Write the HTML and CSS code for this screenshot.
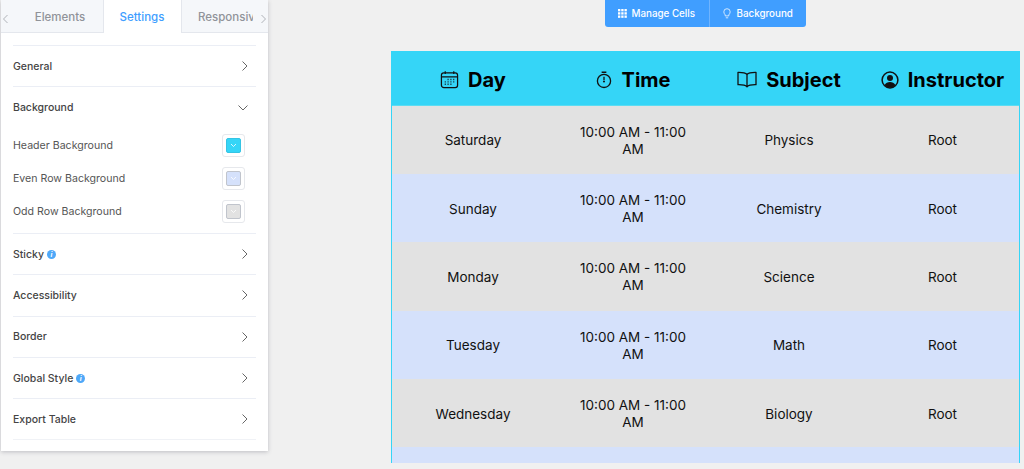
FILE: index.html
```html
<!DOCTYPE html>
<html lang="en">
<head>
<meta charset="utf-8">
<title>Table settings</title>
<link rel="stylesheet" href="styles.css">
</head>
<body>
<div class="page">
  <aside class="panel">
    <div class="tabs">
      <span class="tab-arrow"><svg width="7" height="10" viewBox="0 0 7 10"><path d="M5.5 1 1.500 5l4 4" class="chev"/></svg></span>
      <div class="tab tab-elements">Elements</div>
      <div class="tab tab-active">Settings</div>
      <div class="tab tab-resp"><span class="tab-clip">Responsive</span></div>
      <span class="tab-arrow tab-arrow-r"><svg width="7" height="10" viewBox="0 0 7 10"><path d="M1.500 1l4 4-4 4" class="chev"/></svg></span>
    </div>
    <div class="sections">
      <div class="section"><span class="label">General</span><svg class="arrow" width="8" height="12" viewBox="0 0 8 12"><path d="M1.500 1.500 6 6l-4.500 4.500" class="chev"/></svg></div>
      <div class="section">
        <span class="label">Background</span><svg class="arrow-down" width="12" height="8" viewBox="0 0 12 8"><path d="M1.500 1.500 6 6l4.500-4.500" class="chev"/></svg>
      </div>
      <div class="colors">
        <div class="color-row"><span class="color-label">Header Background</span><span class="swatch"><span class="swatch-fill fill-header"><svg width="7" height="5" viewBox="0 0 7 5"><path d="M1 1l2.500 2.500L6 1" class="swatch-chev"/></svg></span></span></div>
        <div class="color-row"><span class="color-label">Even Row Background</span><span class="swatch"><span class="swatch-fill fill-even"><svg width="7" height="5" viewBox="0 0 7 5"><path d="M1 1l2.500 2.500L6 1" class="swatch-chev"/></svg></span></span></div>
        <div class="color-row"><span class="color-label">Odd Row Background</span><span class="swatch"><span class="swatch-fill fill-odd"><svg width="7" height="5" viewBox="0 0 7 5"><path d="M1 1l2.500 2.500L6 1" class="swatch-chev"/></svg></span></span></div>
      </div>
      <div class="section"><span class="label label-low">Sticky<span class="info">i</span></span><svg class="arrow" width="8" height="12" viewBox="0 0 8 12"><path d="M1.500 1.500 6 6l-4.500 4.500" class="chev"/></svg></div>
      <div class="section"><span class="label">Accessibility</span><svg class="arrow" width="8" height="12" viewBox="0 0 8 12"><path d="M1.500 1.500 6 6l-4.500 4.500" class="chev"/></svg></div>
      <div class="section"><span class="label">Border</span><svg class="arrow" width="8" height="12" viewBox="0 0 8 12"><path d="M1.500 1.500 6 6l-4.500 4.500" class="chev"/></svg></div>
      <div class="section"><span class="label">Global Style<span class="info">i</span></span><svg class="arrow" width="8" height="12" viewBox="0 0 8 12"><path d="M1.500 1.500 6 6l-4.500 4.500" class="chev"/></svg></div>
      <div class="section"><span class="label">Export Table</span><svg class="arrow" width="8" height="12" viewBox="0 0 8 12"><path d="M1.500 1.500 6 6l-4.500 4.500" class="chev"/></svg></div>
    </div>
  </aside>
  <main class="main">
    <div class="toolbar">
      <button class="tool tool-cells">
        <svg width="9" height="9" viewBox="0 0 10 10" fill="#fff"><rect x="0" y="0" width="2.600" height="2.600"/><rect x="3.600" y="0" width="2.600" height="2.600"/><rect x="7.200" y="0" width="2.600" height="2.600"/><rect x="0" y="3.600" width="2.600" height="2.600"/><rect x="3.600" y="3.600" width="2.600" height="2.600"/><rect x="7.200" y="3.600" width="2.600" height="2.600"/><rect x="0" y="7.200" width="2.600" height="2.600"/><rect x="3.600" y="7.200" width="2.600" height="2.600"/><rect x="7.200" y="7.200" width="2.600" height="2.600"/></svg>
        Manage Cells
      </button>
      <button class="tool tool-bg">
        <svg width="8" height="11" viewBox="0 0 8 11" fill="none" stroke="#fff" stroke-opacity=".75" stroke-width="1"><path d="M4 .7a3.200 3.200 0 0 0-3.200 3.200c0 1.300.8 2 1.400 3v1h3.600v-1c.6-1 1.400-1.700 1.400-3A3.200 3.200 0 0 0 4 .7z"/><path d="M2.800 9.800h2.400"/></svg>
        Background
      </button>
    </div>
    <div class="table-wrap">
      <table class="timetable">
        <colgroup><col class="c1"><col class="c2"><col class="c3"><col class="c4"></colgroup>
        <thead>
          <tr>
            <th><span class="th-in"><svg width="19" height="19" viewBox="0 0 20 20" fill="none" stroke="#111" stroke-width="1.300"><rect x="1.500" y="3" width="17" height="15.500" rx="2.500"/><path d="M1.500 7.200h17M5.500 1.200v3M14.500 1.200v3"/><path d="M8 10h1M11 10h1M14 10h1M5 12.500h1M8 12.500h1M11 12.500h1M14 12.500h1M5 15h1M8 15h1M11 15h1" stroke-width="1.400"/></svg>Day</span></th>
            <th><span class="th-in th-time"><svg width="16" height="18" viewBox="0 0 17 19" fill="none" stroke="#111" stroke-width="1.400"><circle cx="8.500" cy="10.500" r="7"/><path d="M6 1.300h5M8.500 6v3.500"/><circle cx="8.500" cy="11" r="1.100" fill="#111" stroke="none"/></svg>Time</span></th>
            <th><span class="th-in"><svg width="20" height="17" viewBox="0 0 20 17" fill="none" stroke="#111" stroke-width="1.300" stroke-linejoin="round"><path d="M10 3.500C8.500 1.800 5.500 1.200 1 1.300v12.400c4.500-.1 7.500.5 9 2.200 1.500-1.700 4.500-2.300 9-2.200V1.300c-4.500-.1-7.500.5-9 2.200zM10 3.500v12.400"/></svg>Subject</span></th>
            <th><span class="th-in"><svg width="18" height="18" viewBox="0 0 18 18"><circle cx="9" cy="9" r="7.900" fill="none" stroke="#111" stroke-width="1.500"/><circle cx="9" cy="7" r="3" fill="#111"/><path d="M3.500 14.200C4.700 11.800 6.700 11 9 11s4.300.8 5.500 3.200A7.500 7.500 0 0 1 9 16.500a7.500 7.500 0 0 1-5.500-2.300z" fill="#111"/></svg>Instructor</span></th>
          </tr>
        </thead>
        <tbody>
          <tr class="odd"><td>Saturday</td><td>10:00 AM - 11:00 AM</td><td>Physics</td><td>Root</td></tr>
          <tr class="even"><td>Sunday</td><td>10:00 AM - 11:00 AM</td><td>Chemistry</td><td>Root</td></tr>
          <tr class="odd"><td>Monday</td><td>10:00 AM - 11:00 AM</td><td>Science</td><td>Root</td></tr>
          <tr class="even"><td>Tuesday</td><td>10:00 AM - 11:00 AM</td><td>Math</td><td>Root</td></tr>
          <tr class="odd"><td>Wednesday</td><td>10:00 AM - 11:00 AM</td><td>Biology</td><td>Root</td></tr>
          <tr class="even"><td></td><td></td><td></td><td></td></tr>
        </tbody>
      </table>
    </div>
  </main>
</div>
</body>
</html>
```

FILE: styles.css
```css
* { box-sizing: border-box; }
html, body { margin: 0; padding: 0; }
body {
  width: 1024px;
  height: 469px;
  overflow: hidden;
  background: #f0f0f0;
  font-family: Inter, "Liberation Sans", sans-serif;
  color: #444;
}
.page { display: flex; align-items: flex-start; height: 469px; }

.panel {
  width: 267px;
  height: 451px;
  flex: none;
  margin-left: 1px;
  background: #fff;
  box-shadow: 0 1px 4px rgba(60, 60, 80, .28);
}
.tabs {
  display: flex;
  position: relative;
  height: 33px;
  background: #f5f7fa;
  font-size: 11.500px;
  font-weight: 500;
  color: #909399;
}
.tab {
  display: flex;
  align-items: center;
  justify-content: center;
  padding-top: 1px;
  border-bottom: 1px solid #e4e7ed;
}
.tab-elements { width: 102px; padding-left: 16px; }
.tab-active {
  width: 79px;
  padding-right: 1px;
  background: #fff;
  color: #409eff;
  border-left: 1px solid #e4e7ed;
  border-right: 1px solid #e4e7ed;
  border-bottom: 0;
}
.tab-resp { flex: 1; justify-content: flex-start; padding-left: 16px; }
.tab-clip { display: block; width: 55px; overflow: hidden; white-space: nowrap; }
.tab-arrow {
  position: absolute;
  left: 1px;
  top: 14px;
  line-height: 0;
}
.tab-arrow-r { left: 259px; }
.tab-arrow .chev { stroke: #b0b3b9; }
.chev { fill: none; stroke: #666; stroke-width: 1; }

.sections { padding: 12px 12px 0; }
.section {
  display: flex;
  align-items: center;
  justify-content: space-between;
  height: 41.400px;
  padding: 0 8px 0 0;
  border-top: 1px solid #ebeef5;
  font-size: 10.500px;
  font-weight: 500;
  color: #444;
}
.section:last-child { border-bottom: 1px solid #f0f2f6; height: 42px; }
.label { display: flex; align-items: center; }
.label-low { padding-top: 1px; }
.info {
  display: inline-flex;
  align-items: center;
  justify-content: center;
  width: 9px;
  height: 9px;
  margin-left: 3px;
  border-radius: 50%;
  background: #4ea8f8;
  color: #fff;
  font-size: 7px;
  font-style: italic;
  font-weight: 700;
}
.arrow { margin-right: -1px; }
.arrow-down { margin-right: -1px; }

.colors { padding: 1px 0 5px; }
.color-row {
  display: flex;
  align-items: center;
  justify-content: space-between;
  height: 33px;
  font-size: 10.600px;
  color: #555;
}
.swatch {
  display: flex;
  align-items: center;
  justify-content: center;
  width: 23px;
  height: 23px;
  margin-right: 11px;
  background: #fff;
  border: 1px solid #e6e8ec;
  border-radius: 3px;
}
.swatch-fill {
  display: flex;
  align-items: center;
  justify-content: center;
  width: 15px;
  height: 15px;
  border: 1px solid #c0c4cc;
  border-radius: 2px;
}
.fill-header { background: #35d5f7; border-color: #35c4e4; }
.fill-even { background: #d5e1fb; }
.fill-odd { background: #e2e2e2; }
.swatch-chev { fill: none; stroke: #fff; stroke-width: .8; }

.main {
  flex: 1;
  display: flex;
  flex-direction: column;
  height: 463px;
  padding-left: 123px;
  padding-right: 4px;
}
.toolbar { display: flex; justify-content: center; height: 27px; margin-bottom: 24px; margin-left: -1px; }
.tool {
  display: flex;
  align-items: center;
  height: 27px;
  margin: 0;
  border: 0;
  background: #409eff;
  color: #fff;
  font-family: Inter, "Liberation Sans", sans-serif;
  font-size: 9.800px;
  font-weight: 500;
}
.tool-cells { width: 105px; padding: 0 0 0 13px; gap: 5px; border-radius: 0 0 0 3px; border-right: 1px solid #6fb4ff; }
.tool-bg { width: 96px; padding: 0 0 0 13px; gap: 6px; border-radius: 0 0 3px 0; }

.table-wrap {
  flex: 1;
  min-height: 0;
  overflow: hidden;
  padding: 0 1px;
  background: #35d5f7;
}
.timetable {
  width: 100%;
  border-collapse: collapse;
  table-layout: fixed;
  color: #111;
}
.c1 { width: 162px; }
.c2 { width: 158px; }
.c3 { width: 154px; }
.c4 { width: 153px; }
th {
  height: 54.500px;
  padding: 3px 0 0;
  background: #35d5f7;
  border-bottom: 1px solid #5cdcf2;
  font-size: 20px;
  font-weight: 700;
  color: #000;
}
.th-in { display: flex; align-items: center; justify-content: center; gap: 9px; }
.th-time { gap: 10px; }
td {
  height: 68.400px;
  padding: 2px 18px 0;
  text-align: center;
  font-size: 13.500px;
  line-height: 17px;
  font-weight: 400;
}
.odd td { background: #e2e2e2; }
.even td { background: #d5e1fb; }
```
